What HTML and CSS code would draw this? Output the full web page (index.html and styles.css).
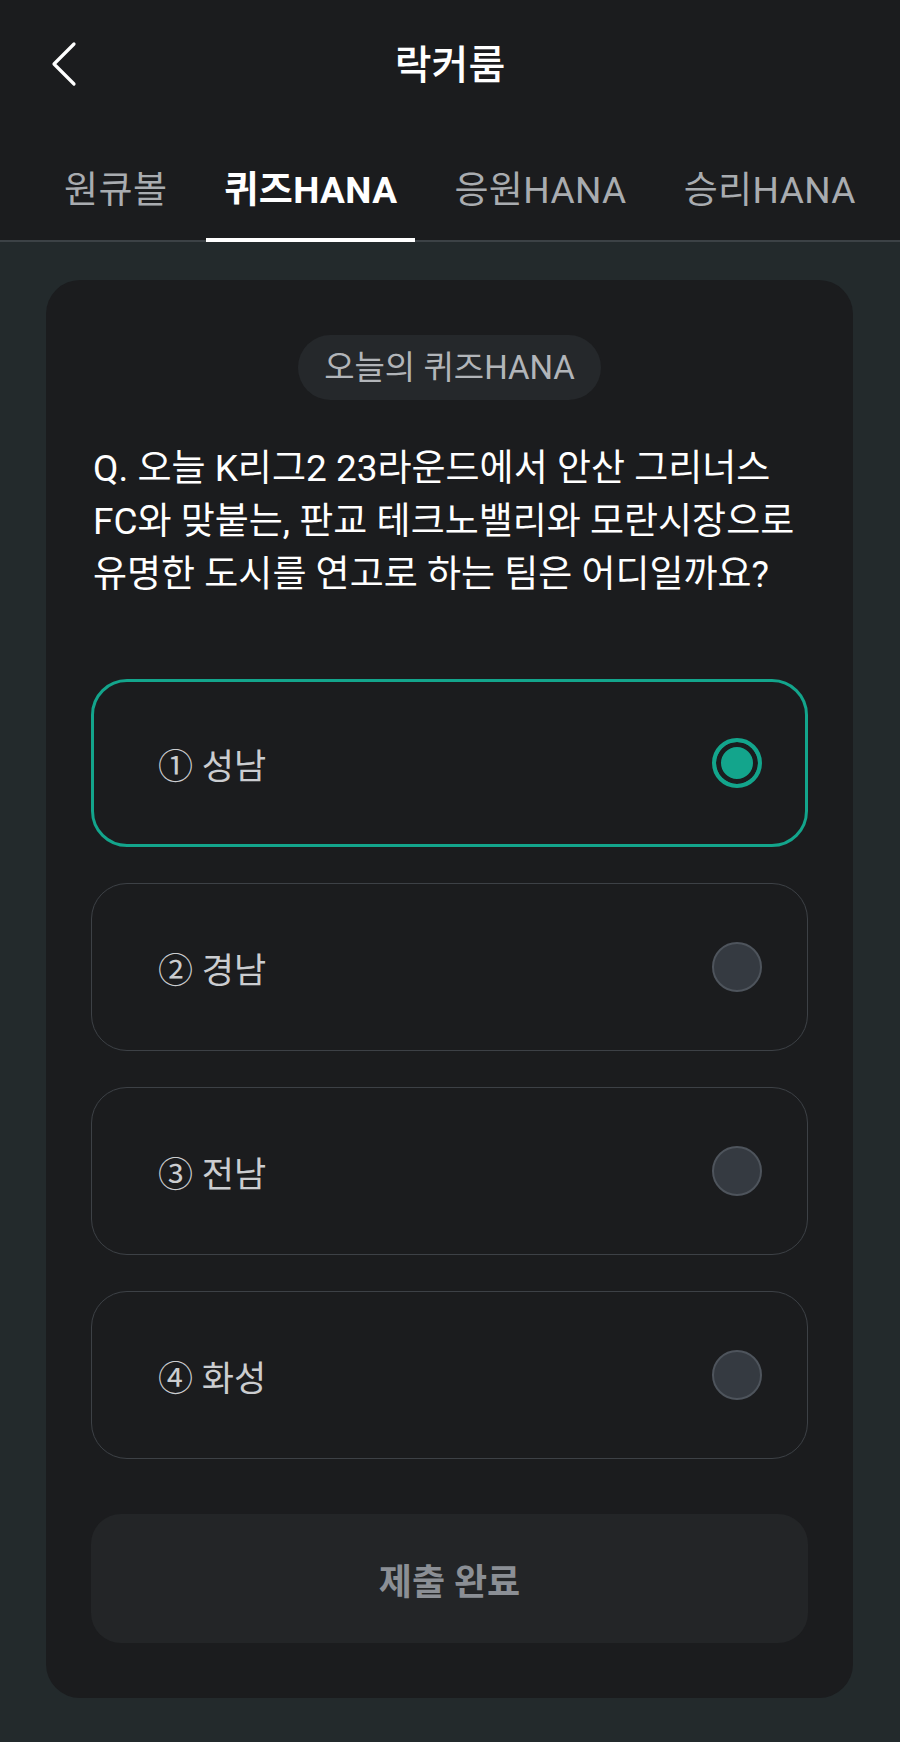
FILE: index.html
```html
<!DOCTYPE html>
<html lang="ko">
<head>
    <meta charset="utf-8">
    <title>락커룸</title>
    <link rel="stylesheet" href="styles.css">
</head>
<body>
    <div class="header">
        <div class="topbar">
            <button class="back" aria-label="뒤로">
                <svg width="30" height="46" viewBox="0 0 30 46">
                    <path d="M24 3 L4 23 L24 43" fill="none" stroke="#ffffff" stroke-width="3.2" stroke-linecap="round" stroke-linejoin="round"/>
                </svg>
            </button>
            <h1>락커룸</h1>
        </div>
        <div class="tabs">
            <div class="tab">원큐볼</div>
            <div class="tab active">퀴즈HANA</div>
            <div class="tab">응원HANA</div>
            <div class="tab">승리HANA</div>
        </div>
    </div>

    <div class="content">
        <div class="card">
            <div class="pill">오늘의 퀴즈HANA</div>
            <p class="question">Q. 오늘 K리그2 23라운드에서 안산 그리너스 FC와 맞붙는, 판교 테크노밸리와 모란시장으로 유명한 도시를 연고로 하는 팀은 어디일까요?</p>

            <div class="options">
                <div class="option selected">
                    <span class="label">① 성남</span>
                    <span class="radio"></span>
                </div>
                <div class="option">
                    <span class="label">② 경남</span>
                    <span class="radio"></span>
                </div>
                <div class="option">
                    <span class="label">③ 전남</span>
                    <span class="radio"></span>
                </div>
                <div class="option">
                    <span class="label">④ 화성</span>
                    <span class="radio"></span>
                </div>
            </div>

            <button class="submit" disabled>제출 완료</button>
        </div>
    </div>
</body>
</html>
```

FILE: styles.css
```css
body {
    margin: 0;
    background: #232a2c;
    font-family: Roboto, "Noto Sans CJK KR", sans-serif;
    color: #ffffff;
}
.header {
    background: #1b1c1e;
    border-bottom: 2px solid #3c4246;
}
.topbar {
    height: 126px;
    display: flex;
    align-items: center;
    justify-content: center;
    position: relative;
}
.back {
    position: absolute;
    left: 50px;
    top: 41px;
    padding: 0;
    background: none;
    border: none;
}
.topbar h1 {
    margin: 0 0 2px;
    font-size: 40px;
    font-weight: 500;
}
.tabs {
    display: flex;
    height: 114px;
    padding-left: 46px;
    gap: 21px;
}
.tab {
    padding: 10px 18px 0;
    font-size: 37px;
    letter-spacing: 0.4px;
    color: #a9acb0;
    display: flex;
    align-items: center;
    margin-bottom: -2px;
    border-bottom: 4px solid transparent;
    box-sizing: border-box;
}
.tab.active {
    color: #ffffff;
    font-weight: 700;
    border-bottom-color: #ffffff;
}
.content {
    padding: 38px 47px 45px 46px;
}
.card {
    background: #1b1c1e;
    border-radius: 34px;
    padding: 55px 45px;
    display: flex;
    flex-direction: column;
}
.pill {
    align-self: center;
    background: #25282b;
    color: #b2b5b9;
    font-size: 33px;
    height: 65px;
    line-height: 65px;
    border-radius: 33px;
    box-sizing: border-box;
    width: 303px;
    text-align: center;
}
.question {
    margin: 42px 0 0 2px;
    font-size: 37px;
    line-height: 53px;
    color: #ffffff;
}
.options {
    margin-top: 78px;
    display: flex;
    flex-direction: column;
    gap: 36px;
}
.option {
    height: 168px;
    box-sizing: border-box;
    border: 1.5px solid #3d4146;
    border-radius: 36px;
    display: flex;
    align-items: center;
    justify-content: space-between;
    padding: 0 45px 0 66px;
}
.option.selected {
    border: 3px solid #13a58c;
    padding: 0 43px 0 64px;
}
.label {
    font-size: 35px;
    color: #cbcdd0;
}
.radio {
    width: 50px;
    height: 50px;
    box-sizing: border-box;
    border-radius: 50%;
    background: #353a41;
    border: 2px solid #4e545c;
}
.selected .radio {
    background: #13a58c;
    border: 4px solid #13a58c;
    box-shadow: inset 0 0 0 5px #1b1c1e;
}
.submit {
    margin-top: 55px;
    height: 129px;
    border: none;
    border-radius: 30px;
    background: #232527;
    color: #8b8f95;
    font-family: Roboto, "Noto Sans CJK KR", sans-serif;
    font-size: 36px;
    font-weight: 700;
}
```
